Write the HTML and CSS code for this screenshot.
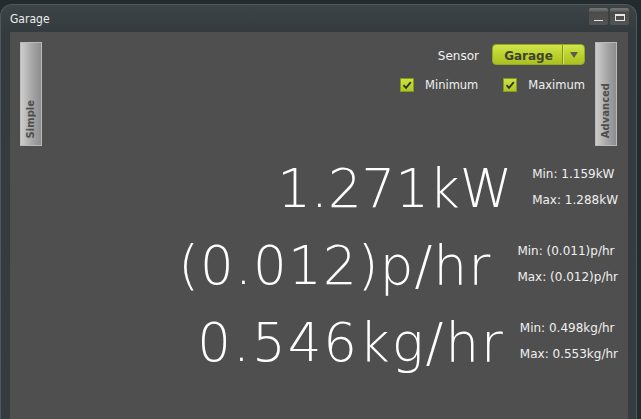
FILE: index.html
```html
<!DOCTYPE html>
<html>
<head>
<meta charset="utf-8">
<link rel="stylesheet" href="styles.css">
</head>
<body>
<div class="window">
  <div class="titlebar">
    <span class="title">Garage</span>
    <div class="winbtns">
      <div class="winbtn"><span class="ico-min"></span></div>
      <div class="winbtn"><span class="ico-max"></span></div>
    </div>
  </div>
  <div class="panel">
    <div class="top">
      <div class="tab"><span class="tab-text">Simple</span></div>
      <div class="controls">
        <div class="sensor-row">
          <span class="sensor-label">Sensor</span>
          <div class="select">
            <span class="select-value">Garage</span>
            <span class="select-arrow"><svg width="8" height="6" viewBox="0 0 8 6"><path d="M0 0H8L4 6Z" fill="#5b5b52"/></svg></span>
          </div>
        </div>
        <div class="check-row">
          <label class="check"><span class="box"><svg width="12" height="12" viewBox="0 0 12 12"><path d="M2.5 6.2 L5 8.8 L9.8 3.2" fill="none" stroke="#2e3010" stroke-width="1.8"/></svg></span><span class="check-label">Minimum</span></label>
          <label class="check"><span class="box"><svg width="12" height="12" viewBox="0 0 12 12"><path d="M2.5 6.2 L5 8.8 L9.8 3.2" fill="none" stroke="#2e3010" stroke-width="1.8"/></svg></span><span class="check-label">Maximum</span></label>
        </div>
      </div>
      <div class="tab"><span class="tab-text">Advanced</span></div>
    </div>
    <div class="readings">
      <div class="reading">
        <span class="big">1.271kW</span>
        <div class="minmax"><span>Min: 1.159kW</span><span>Max: 1.288kW</span></div>
      </div>
      <div class="reading reading-cost">
        <span class="big">(0.012)p/hr</span>
        <div class="minmax"><span>Min: (0.011)p/hr</span><span>Max: (0.012)p/hr</span></div>
      </div>
      <div class="reading reading-co2">
        <span class="big">0.546kg/hr</span>
        <div class="minmax"><span>Min: 0.498kg/hr</span><span>Max: 0.553kg/hr</span></div>
      </div>
    </div>
  </div>
</div>
</body>
</html>
```
FILE: styles.css
```css
html, body {
  margin: 0;
  padding: 0;
  height: 100%;
  overflow: hidden;
}
body {
  background: #232b2f;
  font-family: "DejaVu Sans", Verdana, sans-serif;
  color: #f0f0f0;
}
.window {
  margin: 4px 4px 0 0;
  width: 637px;
  height: 430px;
  box-sizing: border-box;
  border: 1px solid #4f595d;
  border-bottom: none;
  border-radius: 12px 12px 0 0;
  background: linear-gradient(#3c4447 0px, #333b3e 28px, #343c40 100%);
  display: flex;
  flex-direction: column;
}
.titlebar {
  height: 27px;
  display: flex;
  align-items: flex-start;
  justify-content: space-between;
}
.title {
  font-family: "DejaVu Sans Condensed", "DejaVu Sans", sans-serif;
  font-size: 12px;
  color: #ececec;
  margin: 7px 0 0 9px;
}
.winbtns {
  display: flex;
  gap: 2px;
  margin: 3px 7px 0 0;
}
.winbtn {
  width: 19px;
  height: 17px;
  box-sizing: border-box;
  border-radius: 2px;
  background: linear-gradient(#767676 0px, #626262 3px, #4a4a4a 4px, #545454 100%);
  display: flex;
  align-items: center;
  justify-content: center;
}
.ico-min {
  width: 9px;
  height: 1px;
  background: #e6e6e6;
  margin-top: 7px;
}
.ico-max {
  width: 10px;
  height: 7px;
  box-sizing: border-box;
  border: 1px solid #e6e6e6;
  border-top-width: 2px;
  margin-top: 2px;
}
.panel {
  margin: 0 8px 0 9px;
  flex: 1;
  background: #4f4f4f;
  display: flex;
  flex-direction: column;
  padding-top: 10px;
}
.top {
  display: flex;
  padding: 0 11px 0 10px;
}
.tab {
  width: 22px;
  height: 104px;
  box-sizing: border-box;
  border: 1px solid #b9b9b9;
  background: linear-gradient(90deg, #cdcdcd, #a3a3a3 60%, #8d8d8d);
  display: flex;
  justify-content: center;
  align-items: flex-end;
  padding-bottom: 7px;
}
.tab-text {
  writing-mode: vertical-rl;
  transform: rotate(180deg);
  font-size: 10px;
  font-weight: bold;
  color: #4e4e4e;
  line-height: 20px;
}
.controls {
  flex: 1;
  display: flex;
  flex-direction: column;
  align-items: flex-end;
  padding-top: 2px;
  margin-right: 10px;
}
.sensor-row {
  display: flex;
  align-items: center;
  gap: 13px;
}
.sensor-label {
  font-size: 12px;
  color: #f2f2f2;
  margin-top: 2px;
}
.select {
  width: 93px;
  height: 21px;
  box-sizing: border-box;
  border-radius: 4px;
  border: 1px solid #94aa1c;
  background: linear-gradient(#d2e54e, #bbd22e 50%, #aac221);
  display: flex;
  align-items: stretch;
}
.select-value {
  flex: 1;
  display: flex;
  align-items: center;
  justify-content: center;
  font-size: 12px;
  font-weight: bold;
  color: #3f4230;
  padding-top: 2px;
  padding-left: 2px;
  border-right: 1px solid #7f9318;
}
.select-arrow {
  width: 20px;
  display: flex;
  align-items: center;
  justify-content: center;
  border-left: 1px solid #d5e765;
  padding-top: 1px;
}
.check-row {
  display: flex;
  gap: 25px;
  margin-top: 13px;
  margin-right: 0;
}
.check {
  display: flex;
  align-items: center;
  gap: 11px;
}
.box {
  width: 14px;
  height: 14px;
  box-sizing: border-box;
  border: 1px solid #859a1b;
  background: linear-gradient(#cde242, #aec626);
  display: flex;
  align-items: center;
  justify-content: center;
}
.check-label {
  font-size: 11.5px;
  color: #f0f0f0;
}
.readings {
  display: flex;
  flex-direction: column;
  align-items: flex-end;
  gap: 23px;
  margin-top: 15px;
  padding-right: 10px;
}
.reading {
  display: flex;
  align-items: flex-end;
  gap: 20px;
}
.reading-cost {
  gap: 26px;
}
.reading-cost .big {
  letter-spacing: 1.2px;
}
.reading-co2 {
  gap: 15px;
}
.reading-co2 .big {
  letter-spacing: 2px;
}
.big {
  font-family: "DejaVu Sans", sans-serif;
  font-weight: 200;
  font-size: 53px;
  line-height: 53px;
  color: #ffffff;
}
.minmax {
  display: flex;
  flex-direction: column;
  font-size: 12px;
  line-height: 26px;
  padding-bottom: 2px;
  color: #f0f0f0;
}
```
